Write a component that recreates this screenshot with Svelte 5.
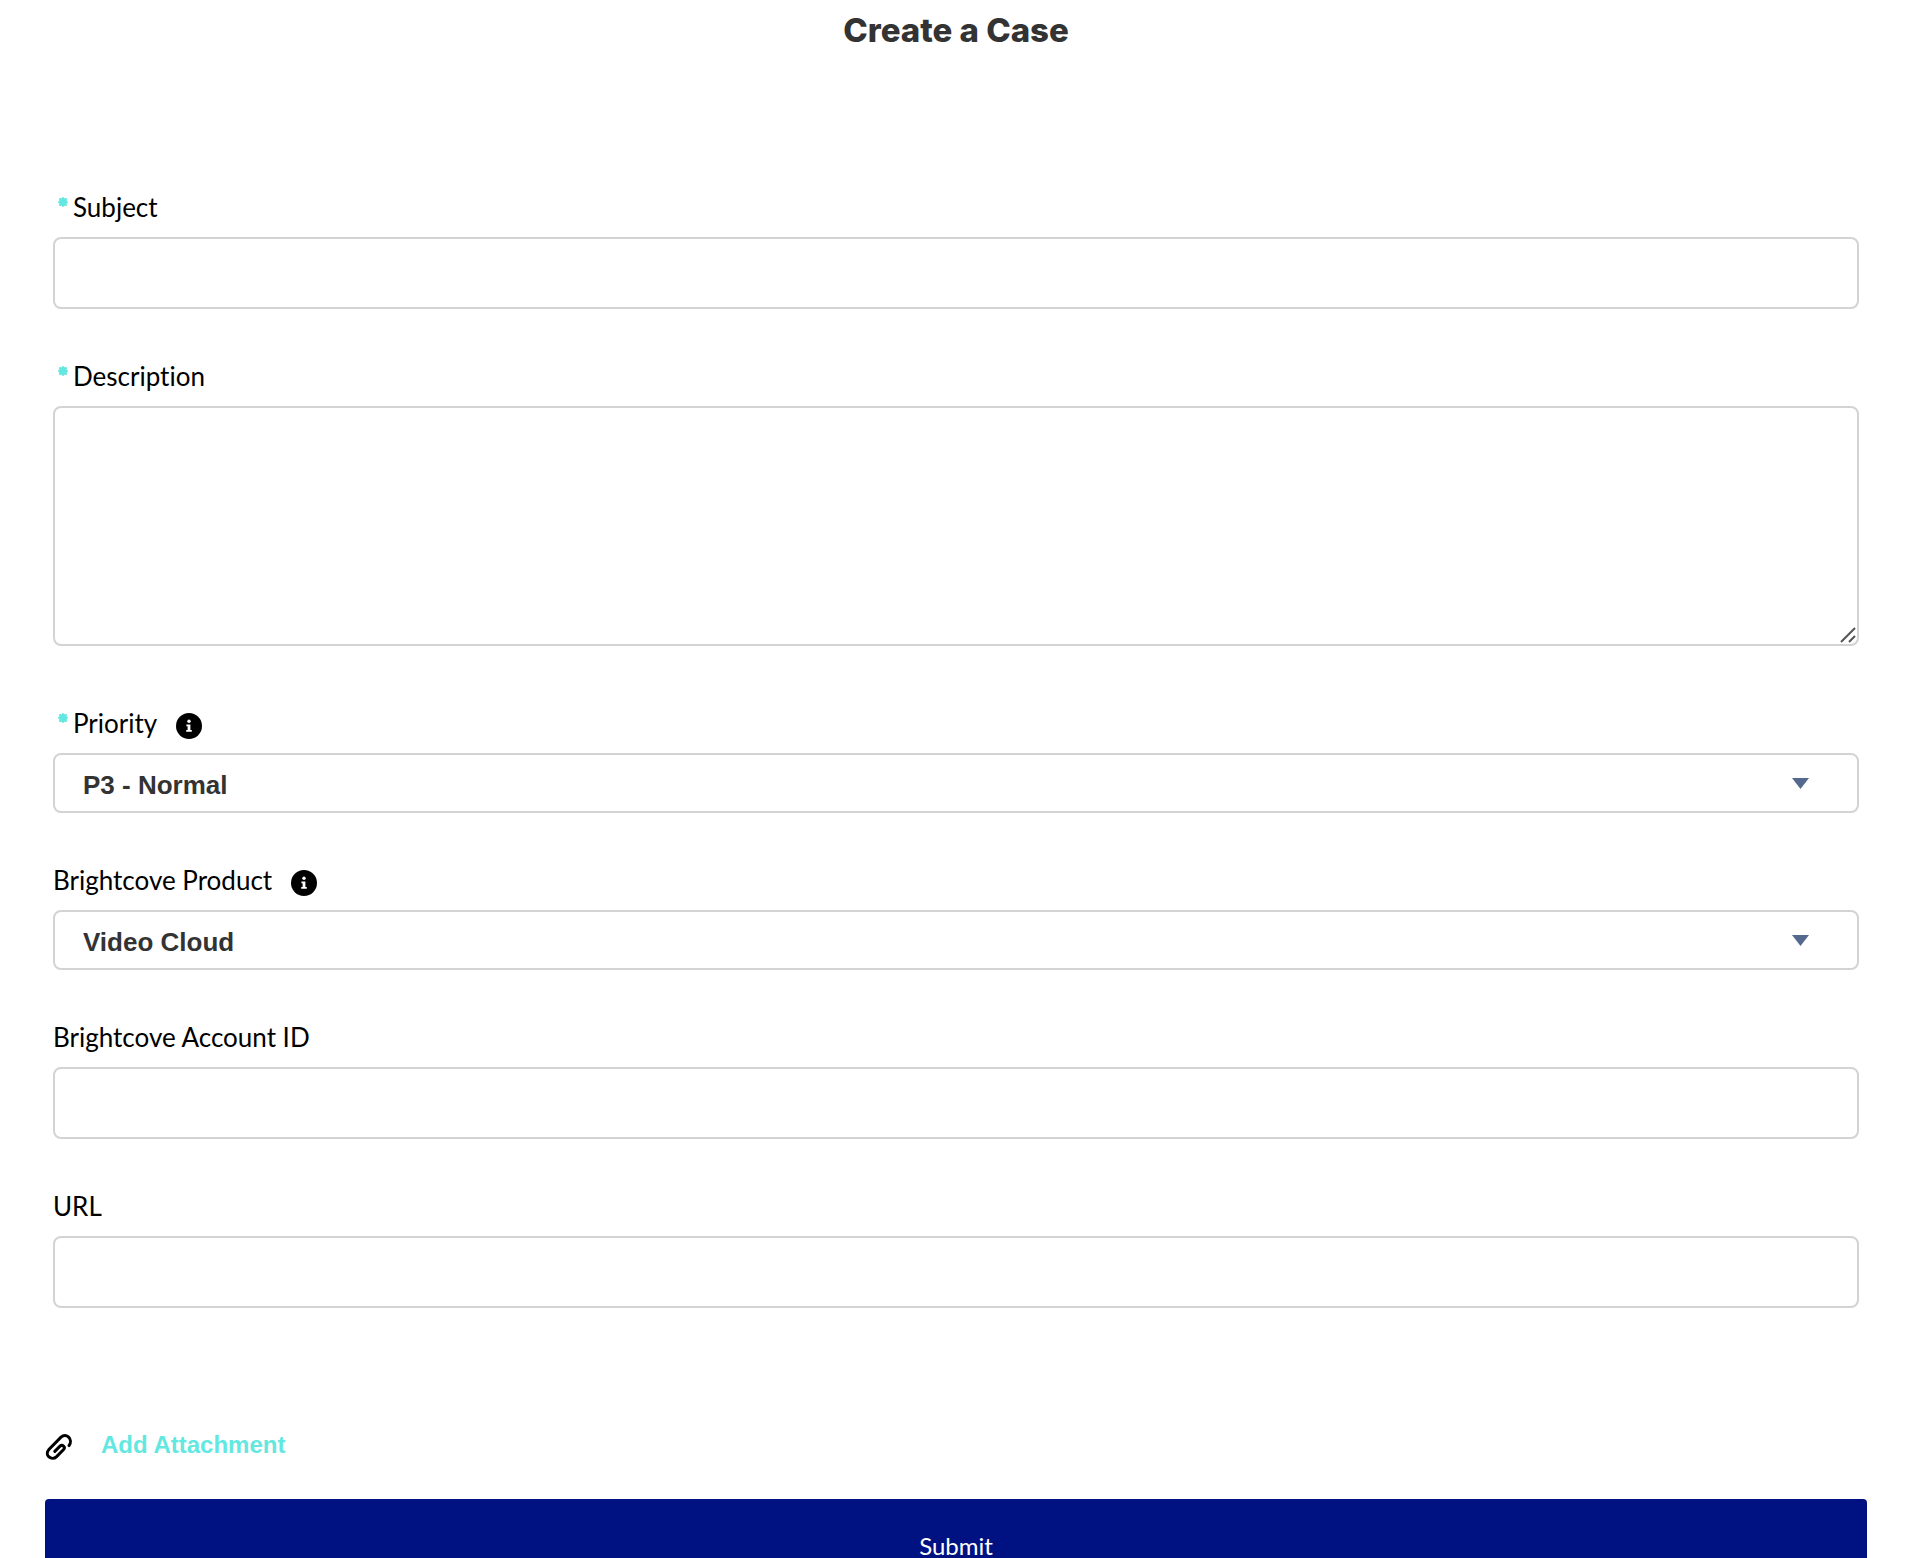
<script>
  let subject = $state('');
  let description = $state('');
  let priority = $state('P3 - Normal');
  let product = $state('Video Cloud');
  let accountId = $state('');
  let url = $state('');

  const priorities = ['P1 - Critical', 'P2 - High', 'P3 - Normal', 'P4 - Low'];
  const products = ['Video Cloud', 'Zencoder', 'Player'];
</script>

{#snippet required()}
  <svg class="required" viewBox="0 0 10 10" aria-hidden="true">
    <circle cx="5" cy="5" r="4" />
    <path d="M5 1v8M1 5h8M2 2l6 6M8 2L2 8" />
  </svg>
{/snippet}

{#snippet info(label)}
  <button type="button" class="info" aria-label={label}>
    <svg viewBox="0 0 26 26" aria-hidden="true">
      <circle cx="13" cy="13" r="13" />
      <circle class="mark" cx="13" cy="8.3" r="1.7" />
      <path class="mark" d="M10.4 11.4h4v5.6h1.4v1.8h-5.6V17h1.4v-3.8h-1.2z" />
    </svg>
  </button>
{/snippet}

{#snippet arrow()}
  <svg class="arrow" viewBox="0 0 17 11" aria-hidden="true"><path d="M0 0h17L8.5 11z" /></svg>
{/snippet}

<main>
  <h1>Create a Case</h1>

  <form onsubmit={(e) => e.preventDefault()}>
    <div class="fields">
      <div class="field">
        <div class="caption">{@render required()}<label for="subject">Subject</label></div>
        <input id="subject" type="text" required bind:value={subject} />
      </div>

      <div class="field tall">
        <div class="caption">{@render required()}<label for="description">Description</label></div>
        <div class="stack">
          <textarea id="description" required bind:value={description}></textarea>
          <svg class="grip" viewBox="0 0 16 16" aria-hidden="true"><path d="M1 15L15 1M9 15l6-6" /></svg>
        </div>
      </div>

      <div class="field">
        <div class="caption">
          {@render required()}<label for="priority">Priority</label>{@render info('About priority')}
        </div>
        <div class="stack">
          <select id="priority" bind:value={priority}>
            {#each priorities as item}<option>{item}</option>{/each}
          </select>
          {@render arrow()}
        </div>
      </div>

      <div class="field">
        <div class="caption">
          <label for="product">Brightcove Product</label>{@render info('About Brightcove product')}
        </div>
        <div class="stack">
          <select id="product" bind:value={product}>
            {#each products as item}<option>{item}</option>{/each}
          </select>
          {@render arrow()}
        </div>
      </div>

      <div class="field">
        <div class="caption"><label for="account">Brightcove Account ID</label></div>
        <input id="account" type="text" bind:value={accountId} />
      </div>

      <div class="field">
        <div class="caption"><label for="url">URL</label></div>
        <input id="url" type="text" bind:value={url} />
      </div>
    </div>

    <div class="attach">
      <svg class="clip" viewBox="-1 -1 28 28" aria-hidden="true">
        <path d="M8.8 17.4L14 12.200C16.400 10 19.800 13 17.600 15.500L10.600 22.600C5.400 27.600-2 21 2.900 15.400L15 3.200C20.600-1.800 27.500 5.600 23 11.600" />
      </svg>
      <button type="button">Add Attachment</button>
    </div>

    <button type="submit" class="submit">Submit</button>
  </form>
</main>

<style>
  :global(html) {
    scrollbar-width: none;
  }
  :global(body) {
    margin: 0;
    background: #fff;
  }
  main {
    box-sizing: border-box;
    height: 100vh;
    overflow-y: auto;
    scrollbar-width: none;
    padding: 9px 49px 0 45px;
    font-family: Lato, 'Liberation Sans', sans-serif;
    font-variant-ligatures: none;
    color: #000;
  }
  h1 {
    margin: 0;
    font: 800 33px/42px Inter, sans-serif;
    color: #333;
    text-align: center;
  }
  .fields {
    display: flex;
    flex-direction: column;
    gap: 48px;
    padding: 137px 8px 0;
  }
  .field {
    display: flex;
    flex-direction: column;
  }
  .tall {
    margin-bottom: 10px;
  }
  .caption {
    display: flex;
    align-items: center;
    height: 38px;
    margin-bottom: 11px;
    font-size: 26px;
    line-height: 38px;
  }
  .required {
    width: 10px;
    height: 10px;
    margin: 0 5px 10px;
    fill: #62e8e0;
    stroke: #62e8e0;
    stroke-width: 2;
    stroke-linecap: round;
  }
  .required circle {
    stroke: none;
  }
  button {
    border: 0;
    padding: 0;
    background: none;
    cursor: pointer;
  }
  .info {
    width: 26px;
    height: 26px;
    margin: 6px 0 0 19px;
  }
  .info svg {
    display: block;
  }
  .mark {
    fill: #fff;
  }
  input,
  textarea,
  select {
    box-sizing: border-box;
    width: 100%;
    margin: 0;
    border: 2px solid #d3d3d3;
    border-radius: 8px;
    padding: 0 28px;
    background: #fff;
    color: #333;
    font: bold 26px/32px 'Liberation Sans', sans-serif;
  }
  input {
    height: 72px;
  }
  textarea {
    display: block;
    height: 240px;
    padding: 16px 28px;
    resize: vertical;
  }
  textarea::-webkit-resizer {
    background: transparent;
  }
  select {
    height: 60px;
    padding-top: 3px;
    appearance: none;
  }
  .stack {
    display: grid;
  }
  .stack > * {
    grid-area: 1 / 1;
  }
  .grip {
    place-self: end;
    width: 16px;
    height: 16px;
    margin: 3px;
    fill: none;
    stroke: #555;
    stroke-width: 2;
    pointer-events: none;
  }
  .arrow {
    place-self: center end;
    width: 17px;
    height: 11px;
    margin: 0 50px 0 0;
    fill: #54698d;
    pointer-events: none;
  }
  .attach {
    display: flex;
    align-items: center;
    gap: 28px;
    padding: 121px 0 38px;
  }
  .clip {
    width: 28px;
    height: 28px;
    margin-top: 4px;
    fill: none;
    stroke: #000;
    stroke-width: 3;
    stroke-linecap: round;
  }
  .attach button {
    color: #62e8e0;
    font: bold 24px/32px 'Liberation Sans', sans-serif;
  }
  .submit {
    display: block;
    width: 100%;
    height: 96px;
    padding-bottom: 2px;
    border-radius: 4px;
    background: #001282;
    color: #fff;
    font: 24px/20px Lato, sans-serif;
  }
</style>
